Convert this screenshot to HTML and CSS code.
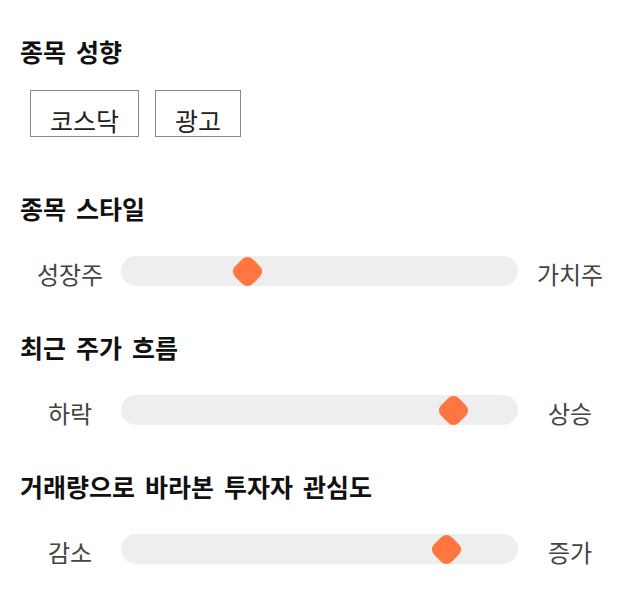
FILE: index.html
```html
<!DOCTYPE html>
<html lang="ko">
<head>
<meta charset="utf-8">
<link rel="stylesheet" href="styles.css">
</head>
<body>
<div class="panel">
  <section class="section">
    <h2 class="title">종목 성향</h2>
    <div class="tags">
      <span class="tag">코스닥</span>
      <span class="tag">광고</span>
    </div>
  </section>
  <section class="section">
    <h2 class="title">종목 스타일</h2>
    <div class="slider-row">
      <span class="label">성장주</span>
      <div class="track"><span class="thumb" style="left: 31.8%"></span></div>
      <span class="label">가치주</span>
    </div>
  </section>
  <section class="section">
    <h2 class="title">최근 주가 흐름</h2>
    <div class="slider-row">
      <span class="label">하락</span>
      <div class="track"><span class="thumb" style="left: 83.8%"></span></div>
      <span class="label">상승</span>
    </div>
  </section>
  <section class="section">
    <h2 class="title">거래량으로 바라본 투자자 관심도</h2>
    <div class="slider-row">
      <span class="label">감소</span>
      <div class="track"><span class="thumb" style="left: 82.1%"></span></div>
      <span class="label">증가</span>
    </div>
  </section>
</div>
</body>
</html>
```
FILE: styles.css
```css
* { box-sizing: border-box; }
html, body { margin: 0; padding: 0; background: #fff; }
body {
  font-family: "Noto Sans CJK KR", "Noto Sans", sans-serif;
  color: #111;
}
.panel {
  padding: 35px 20px 40px 20px;
  width: 640px;
}
.section { margin: 0; }
.section + .section { margin-top: 45px; }
.section:nth-child(2) { margin-top: 55px; }
.title {
  margin: 0;
  font-size: 25px;
  font-weight: 700;
  line-height: 32px;
  height: 32px;
  color: #111;
  word-spacing: 3px;
}
.tags {
  display: flex;
  gap: 16px;
  margin-top: 23px;
  padding-left: 10px;
}
.tag {
  display: block;
  border: 1px solid #888;
  font-size: 25px;
  line-height: 30px;
  padding: 14px 19px 1px;
  color: #222;
}
.slider-row {
  display: grid;
  grid-template-columns: 100px 1fr 100px;
  align-items: center;
  height: 30px;
  margin-top: 32px;
}
.label {
  text-align: center;
  font-size: 24px;
  color: #444;
  line-height: 24px;
  height: 30px;
  padding-top: 6px;
}
.track {
  position: relative;
  height: 30px;
  background: #eeeeee;
  border-radius: 15px;
  margin: 0 2px 0 1px;
}
.thumb {
  position: absolute;
  top: 2.5px;
  width: 25px;
  height: 25px;
  margin-left: -12.5px;
  background: #ff7640;
  border-radius: 30%;
  transform: rotate(45deg);
}
```
